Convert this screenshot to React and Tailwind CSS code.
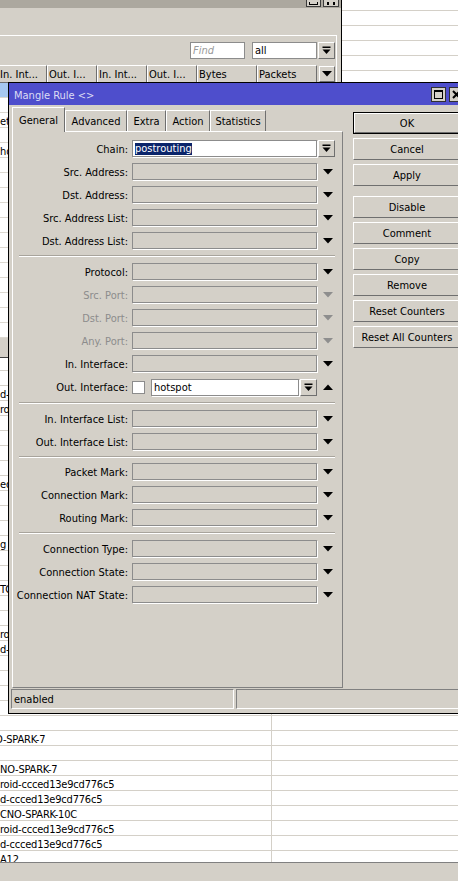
import React from "react";

const FONT =
  "font-['DejaVu_Sans_Condensed','DejaVu_Sans',sans-serif] font-stretch-condensed";

const sunken = "border border-[#8c8c8c] shadow-[1px_1px_0_#ffffff]";
const raised =
  "border border-t-white border-l-white border-r-[#6f6f6f] border-b-[#6f6f6f]";

function Tri({ up, gray }) {
  const fill = gray ? "#8e8e8e" : "#000";
  return (
    <svg width="10" height="6" viewBox="0 0 10 6" className="block">
      <polygon points={up ? "0,6 10,6 5,0.5" : "0,0 10,0 5,5.5"} fill={fill} />
    </svg>
  );
}

function ListIcon() {
  return (
    <svg width="9" height="9" viewBox="0 0 9 9" className="block">
      <rect x="0.5" y="0.5" width="8" height="1.5" fill="#000" />
      <polygon points="0.5,3.5 8.5,3.5 4.5,8" fill="#000" />
    </svg>
  );
}

function DropBtn({ w = "w-[17px]" }) {
  return (
    <div className={`flex h-[17px] ${w} shrink-0 items-center justify-center bg-[#d4d0c8] ${raised}`}>
      <ListIcon />
    </div>
  );
}

const groups = [
  [
    { label: "Chain:", kind: "chain" },
    { label: "Src. Address:" },
    { label: "Dst. Address:" },
    { label: "Src. Address List:" },
    { label: "Dst. Address List:" },
  ],
  [
    { label: "Protocol:" },
    { label: "Src. Port:", gray: true },
    { label: "Dst. Port:", gray: true },
    { label: "Any. Port:", gray: true },
    { label: "In. Interface:" },
    { label: "Out. Interface:", kind: "out" },
  ],
  [{ label: "In. Interface List:" }, { label: "Out. Interface List:" }],
  [{ label: "Packet Mark:" }, { label: "Connection Mark:" }, { label: "Routing Mark:" }],
  [
    { label: "Connection Type:" },
    { label: "Connection State:" },
    { label: "Connection NAT State:" },
  ],
];

function Field({ f }) {
  return (
    <div className={`flex items-center ${f.kind === "out" ? "h-[18px]" : "h-[17px]"}`}>
      <div
        className={`w-[119px] shrink-0 whitespace-nowrap pr-[4px] pt-[2px] text-right leading-[14px] ${
          f.gray ? "text-[#8c8c8c]" : "text-black"
        }`}
      >
        {f.label}
      </div>
      {f.kind === "chain" ? (
        <>
          <div className={`flex h-[17px] w-[185px] items-center bg-white pl-[2px] pt-[1px] ${sunken}`}>
            <span className="bg-[#0a246a] leading-[12px] text-white">postrouting</span>
          </div>
          <div className="ml-[1px]">
            <DropBtn />
          </div>
        </>
      ) : f.kind === "out" ? (
        <>
          <div className="h-[13px] w-[13px] shrink-0 border border-[#8c8c8c] bg-white" />
          <div className={`ml-[6px] flex h-[17px] w-[148px] items-center bg-white pl-[2px] pt-[2px] ${sunken}`}>
            hotspot
          </div>
          <div className="ml-[1px]">
            <DropBtn />
          </div>
          <div className="pl-[6px]">
            <Tri up />
          </div>
        </>
      ) : (
        <>
          <div className={`h-[17px] w-[185px] shrink-0 ${sunken}`} />
          <div className="pl-[6px]">
            <Tri gray={f.gray} />
          </div>
        </>
      )}
    </div>
  );
}

function Sep({ tight }) {
  return (
    <div
      className={`ml-[6px] h-[2px] w-[316px] border-t border-t-[#a8a49c] border-b border-b-white ${
        tight ? "mb-[-1px]" : ""
      }`}
    />
  );
}

function Btn({ children, def, extra = "" }) {
  return (
    <div className={`h-[22px] w-[108px] ${def ? "border border-black" : ""} ${extra}`}>
      <div className={`flex h-full items-center justify-center pt-[2px] ${raised}`}>{children}</div>
    </div>
  );
}

const tabs = [
  { name: "General", w: "w-[53px]", active: true },
  { name: "Advanced", w: "w-[62px]" },
  { name: "Extra", w: "w-[39px]" },
  { name: "Action", w: "w-[44px]" },
  { name: "Statistics", w: "w-[56px]" },
];

const bRows = Array.from({ length: 58 }, () => "");
Object.assign(bRows, {
  26: "d-ccced13e9cd776c5",
  27: "roid-ccced13e9cd776c5",
  32: "ed",
  36: "g",
  39: "TC",
  42: "roid-ccced13e9cd776c5",
  43: "d-ccced13e9cd776c5",
  49: "O-SPARK-7",
  51: "NO-SPARK-7",
  52: "roid-ccced13e9cd776c5",
  53: "d-ccced13e9cd776c5",
  54: "CNO-SPARK-10C",
  55: "roid-ccced13e9cd776c5",
  56: "d-ccced13e9cd776c5",
  57: "A12",
});

const aRows = ["", "", "ether1-wan", "", "hotspot", "", "", "", "", "", "", "", "", "", "", "", "", ""];

const headCols = [
  { t: "In. Int...", w: "w-[47px]", first: true },
  { t: "Out. I...", w: "w-[50px]" },
  { t: "In. Int...", w: "w-[50px]" },
  { t: "Out. I...", w: "w-[50px]" },
  { t: "Bytes", w: "w-[60px]" },
  { t: "Packets", w: "w-[60px]" },
];

export default function App() {
  return (
    <div className={`relative h-[882px] w-[458px] overflow-hidden bg-white text-[11px] text-black ${FONT}`}>
      {/* back window: hosts table */}
      <div className="absolute inset-0 flex flex-col bg-white">
        <div className="min-h-0 flex-1 overflow-hidden">
          {bRows.map((t, i) => (
            <div
              key={i}
              className={`flex border-b border-[#d4d0c8] ${i === 0 ? "h-[11px]" : "h-[15px]"}`}
            >
              <div className="flex w-[272px] shrink-0 items-center overflow-hidden whitespace-nowrap border-r border-[#d4d0c8] pt-[2px] leading-[13px] tracking-[-0.2px]">
                <span className={i === 49 ? "ml-[-5px]" : ""}>{t}</span>
              </div>
            </div>
          ))}
        </div>
        <div className="h-[20px] shrink-0 border-t border-[#808080] border-b border-b-white bg-[#d4d0c8]" />
      </div>

      {/* middle window: mangle list */}
      <div className="absolute left-0 top-0 flex h-[358px] w-[342px] flex-col border-r border-black bg-[#d4d0c8]">
        <div className="flex h-[8px] shrink-0 justify-end gap-[2px] bg-[#aca89f] pr-[2px]">
          <div className="flex h-[7px] w-[15px] items-end justify-center border border-t-0 border-[#3c3c3c] bg-[#d4d0c8] pb-[1px]">
            <div className="h-[3px] w-[9px] border border-t-0 border-black" />
          </div>
          <div className="flex h-[7px] w-[16px] items-end justify-center border border-t-0 border-[#3c3c3c] bg-[#d4d0c8] pb-[1px]">
            <div className="h-[3px] w-[8px] border-x-2 border-black" />
          </div>
        </div>
        <div className="h-[27px] shrink-0" />
        <div className="mr-[4px] flex min-h-0 flex-1 flex-col border-t border-r border-white">
          <div className="flex h-[29px] shrink-0 items-center justify-end pr-[1px]">
            <div className="flex h-[17px] w-[55px] items-center border border-[#8c8c8c] bg-white pl-[2px] pt-[2px] italic text-[#9a9a9a]">
              Find
            </div>
            <div className="ml-[7px] flex h-[17px] w-[65px] items-center border border-[#8c8c8c] bg-white pl-[2px] pt-[2px]">
              all
            </div>
            <div className="ml-[1px]">
              <DropBtn />
            </div>
          </div>
          <div className="flex h-[18px] shrink-0 items-center">
            {headCols.map((c, i) => (
              <div
                key={i}
                className={`flex h-[18px] ${c.w} shrink-0 items-center overflow-hidden whitespace-nowrap pt-[2px] ${raised} ${
                  c.first ? "border-l-0" : "pl-[1px]"
                }`}
              >
                {c.t}
              </div>
            ))}
            <div className={`ml-[2px] flex h-[16px] w-[16px] items-center justify-center ${raised}`}>
              <Tri />
            </div>
          </div>
          <div className="min-h-0 flex-1 overflow-hidden bg-white">
            {aRows.map((t, i) => (
              <div
                key={i}
                className={`flex h-[15px] items-center whitespace-nowrap border-b border-[#dcd8d0] pt-[2px] leading-[13px] ${
                  i === 0 ? "bg-[#a6c8f0]" : ""
                }`}
              >
                {t}
              </div>
            ))}
          </div>
        </div>
        <div className="h-[20px] shrink-0 border-b border-[#404040] bg-[#d4d0c8]" />
      </div>

      {/* dialog */}
      <div className="absolute left-[8px] top-[82px] flex h-[632px] w-[458px] flex-col border border-black bg-[#d4d0c8]">
        <div className="flex h-[22px] shrink-0 items-center bg-[#4e4ecc] pl-[5px] pr-[1px]">
          <div className="pt-[4px] text-[11px] text-[#dcdcf4]">Mangle Rule &lt;&gt;</div>
          <div className="ml-auto flex items-center gap-[3px]">
            <div className="flex h-[15px] w-[15px] items-center justify-center border border-[#303030] bg-[#d4d0c8]">
              <div className="h-[9px] w-[9px] border border-t-2 border-black" />
            </div>
            <div className="flex h-[15px] w-[15px] items-center justify-center border border-[#303030] bg-[#d4d0c8]">
              <svg width="9" height="9" viewBox="0 0 9 9" className="block">
                <path d="M1 1 L8 8 M8 1 L1 8" stroke="#000" strokeWidth="2" />
              </svg>
            </div>
          </div>
        </div>

        <div className="flex min-h-0 flex-1 flex-col pt-[2px]">
          <div className="flex pl-[3px]">
            <div className="flex w-[331px] shrink-0 flex-col">
              <div className="flex h-[24px] items-end">
                {tabs.map((t) =>
                  t.active ? (
                    <div
                      key={t.name}
                      className={`relative z-10 mb-[-1px] flex h-[25px] ${t.w} items-start justify-center border-l border-t border-r border-l-white border-t-white border-r-[#6f6f6f] bg-[#d4d0c8] pt-[6px] leading-[13px]`}
                    >
                      {t.name}
                    </div>
                  ) : (
                    <div
                      key={t.name}
                      className={`flex h-[21px] ${t.w} items-center justify-center border-l border-t border-r border-l-white border-t-white border-r-[#6f6f6f] pt-[3px]`}
                    >
                      {t.name}
                    </div>
                  )
                )}
              </div>
              <div className="flex h-[557px] flex-col gap-[6px] border border-t-white border-l-white border-r-[#808080] border-b-[#808080] pt-[8px]">
                {groups.map((g, gi) => (
                  <React.Fragment key={gi}>
                    {gi > 0 && <Sep tight={gi === 3} />}
                    {g.map((f) => (
                      <Field key={f.label} f={f} />
                    ))}
                  </React.Fragment>
                ))}
              </div>
            </div>

            <div className="ml-[10px] mt-[5px] flex flex-col gap-[4px]">
              <Btn def>OK</Btn>
              <Btn>Cancel</Btn>
              <Btn>Apply</Btn>
              <Btn extra="mt-[6px]">Disable</Btn>
              <Btn>Comment</Btn>
              <Btn>Copy</Btn>
              <Btn>Remove</Btn>
              <Btn>Reset Counters</Btn>
              <Btn>Reset All Counters</Btn>
            </div>
          </div>

          <div className="mt-[1px] flex h-[20px] gap-[2px] pl-[2px]">
            <div className="flex w-[223px] items-center border border-t-[#808080] border-l-[#808080] border-r-white border-b-white pl-[2px] pt-[2px]">
              enabled
            </div>
            <div className="flex-1 border border-t-[#808080] border-l-[#808080] border-r-white border-b-white" />
          </div>
        </div>
      </div>
    </div>
  );
}
